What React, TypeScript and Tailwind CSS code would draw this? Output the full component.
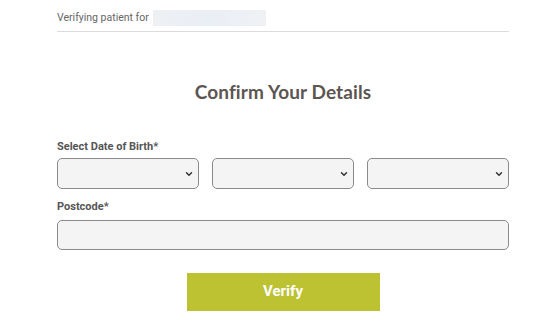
import { ChevronDown } from "lucide-react";

const dobFields = ["day", "month", "year"];

function DobSelect({ name }: { name: string }) {
  return (
    <div className="flex h-[31px] flex-1 items-center rounded-[5px] border border-[#8a8a8a] bg-[#f3f4f3] pr-[4px]">
      <select
        name={name}
        className="h-full flex-1 appearance-none bg-transparent px-2 outline-none"
      />
      <ChevronDown className="h-[10px] w-[10px] text-[#333]" strokeWidth={3.5} />
    </div>
  );
}

export default function App() {
  return (
    <div
      className="min-h-[327px] w-[559px] bg-white"
      style={{ fontFamily: "Roboto, 'Liberation Sans', sans-serif" }}
    >
      <div className="mx-[57px] w-[452px]">
        {/* patient header */}
        <div className="flex h-[32px] items-center gap-[4px] border-b border-[#dcdcdc] pt-[4px]">
          <span className="text-[10.5px] text-[#666]">Verifying patient for</span>
          <span className="h-[16px] w-[113px] rounded-[1px] bg-gradient-to-r from-[#eef0f4] via-[#eaeef5] to-[#eff1f4]" />
        </div>

        <h2
          className="mt-[46px] text-center text-[19px] font-bold tracking-[0.005em] text-[#5c5652]"
          style={{ fontFamily: "Lato, 'Open Sans', sans-serif" }}
        >
          Confirm Your Details
        </h2>

        <form className="mt-[32px]">
          <label className="block text-[11px] font-bold text-[#555]">
            Select Date of Birth*
          </label>
          <div className="mt-[3px] flex gap-[13px]">
            {dobFields.map((f) => (
              <DobSelect key={f} name={f} />
            ))}
          </div>

          <label className="mt-[10px] block text-[11px] font-bold text-[#555]">
            Postcode*
          </label>
          <input
            name="postcode"
            className="mt-[4px] block h-[30px] w-full rounded-[5px] border border-[#8a8a8a] bg-[#f3f4f3] px-2 outline-none"
          />

          <div className="mt-[23px] flex justify-center">
            <button
              type="button"
              className="h-[38px] w-[193px] bg-[#bdc233] text-[15px] font-bold text-white"
            >
              Verify
            </button>
          </div>
        </form>
      </div>
    </div>
  );
}
